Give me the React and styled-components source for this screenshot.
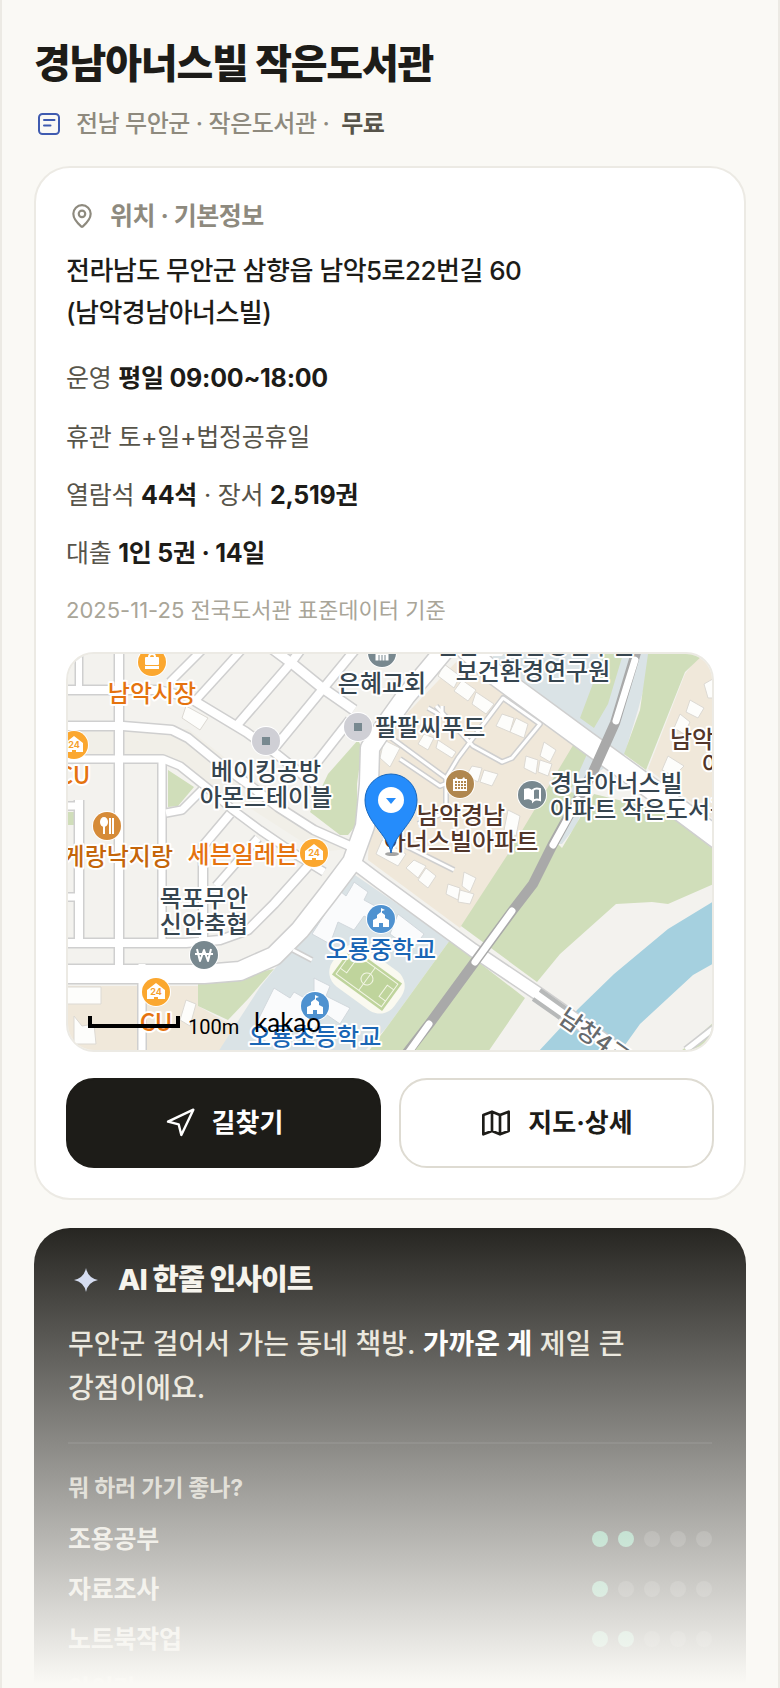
import React from 'react';
import styled, { createGlobalStyle } from 'styled-components';
import { MapPin, Navigation } from 'lucide-react';

const GlobalStyle = createGlobalStyle`
  * {
    box-sizing: border-box;
  }
  body {
    margin: 0;
    background: #faf9f5;
    color: #1d1c18;
    font-family: Inter, "Noto Sans CJK KR", sans-serif;
    word-break: keep-all;
  }
  h1, h2, h3, p, ul {
    margin: 0;
    padding: 0;
  }
`

const Page = styled.main`
  position: relative;
  height: 100vh;
  overflow: hidden;
  padding: 36px 32px 0;
  border-left: 2px solid #eceae4;
  border-right: 2px solid #eceae4;
`

const Title = styled.h1`
  font-size: 40px;
  font-weight: 800;
  line-height: 56px;
  letter-spacing: -0.03em;
`

const Meta = styled.div`
  display: flex;
  align-items: center;
  gap: 12px;
  margin: 14px 0 24px;
  font-size: 24px;
  font-weight: 500;
  line-height: 36px;
  letter-spacing: -0.02em;
  color: #8e8a7e;

  strong {
    margin-left: 6px;
    color: #57544a;
    font-weight: 600;
  }
`

const IconBox = styled.span`
  display: flex;
  align-items: center;
  justify-content: center;
  flex: none;
  width: ${(props) => props.$size}px;
`

const Card = styled.section`
  padding: 30px;
  border: 2px solid #eceae4;
  border-radius: 36px;
  background: white;
`

const CardHead = styled.h2`
  display: flex;
  align-items: center;
  gap: 12px;
  font-size: 25px;
  font-weight: 700;
  line-height: 36px;
  letter-spacing: -0.02em;
  color: #8e8a7e;
`

const Address = styled.p`
  max-width: 500px;
  margin: 16px 0 24px;
  font-size: 26px;
  font-weight: 500;
  line-height: 42px;
  letter-spacing: -0.02em;
`

const Facts = styled.div`
  display: flex;
  flex-direction: column;
  gap: 20px;
  font-size: 25px;
  line-height: 38px;
  letter-spacing: -0.01em;
  color: #57544a;

  p:first-child {
    line-height: 40px;
  }
  strong {
    color: #1d1c18;
    font-weight: 700;
  }
`

const Source = styled.p`
  font-size: 22px;
  line-height: 36px;
  letter-spacing: 0;
  color: #a9a598;
`

const MapFrame = styled.div`
  height: 400px;
  margin: 24px 0 26px;
  border: 2px solid #eceae4;
  border-radius: 28px;
  overflow: hidden;
  background: #f3f2ee;

  svg {
    display: block;
    width: 100%;
    height: 100%;
  }
`

const Actions = styled.div`
  display: grid;
  grid-template-columns: 1fr 1fr;
  gap: 18px;
`

const ActionButton = styled.button`
  display: flex;
  align-items: center;
  justify-content: center;
  gap: 16px;
  height: 90px;
  border: 2px solid ${(props) => (props.$dark ? '#1d1c18' : '#dedbd2')};
  border-radius: 28px;
  background: ${(props) => (props.$dark ? '#1d1c18' : 'white')};
  color: ${(props) => (props.$dark ? 'white' : '#1d1c18')};
  font-family: inherit;
  font-size: 26px;
  font-weight: 700;
  line-height: 32px;
`

const Insight = styled.section`
  margin-top: 28px;
  padding: 34px;
  border-radius: 36px;
  background: #1d1c18;
`

const InsightHead = styled.h2`
  display: flex;
  align-items: center;
  gap: 14px;
  font-size: 29px;
  font-weight: 800;
  line-height: 36px;
  letter-spacing: -0.03em;
  color: #f5f3ec;
`

const InsightText = styled.p`
  max-width: 600px;
  margin: 24px 0 32px;
  font-size: 28px;
  font-weight: 500;
  line-height: 44px;
  color: #e5e1d5;

  strong {
    color: white;
    font-weight: 700;
  }
`

const Purpose = styled.div`
  padding-top: 28px;
  border-top: 2px solid rgba(255, 255, 255, 0.08);
`

const PurposeTitle = styled.h3`
  margin-bottom: 20px;
  font-size: 23px;
  font-weight: 700;
  line-height: 32px;
  letter-spacing: -0.01em;
  color: #c1beb2;
`

const ScoreList = styled.ul`
  display: flex;
  flex-direction: column;
  gap: 20px;
  list-style: none;
`

const ScoreRow = styled.li`
  display: flex;
  align-items: center;
  justify-content: space-between;
  font-size: 25px;
  font-weight: 600;
  line-height: 30px;
  letter-spacing: -0.01em;
  color: #dddad0;
`

const Dots = styled.span`
  display: flex;
  gap: 10px;
`

const Dot = styled.i`
  width: 16px;
  height: 16px;
  border-radius: 50%;
  background: ${(props) => (props.$on ? '#57b38b' : 'rgba(255, 255, 255, 0.15)')};
`

const Fade = styled.div`
  position: absolute;
  left: -2px;
  right: -2px;
  bottom: 0;
  height: 480px;
  background: linear-gradient(rgba(250, 249, 245, 0), #faf9f5 99%);
  pointer-events: none;
`

const MapText = styled.text`
  font-family: "Noto Sans CJK KR", sans-serif;
  font-size: 24px;
  font-weight: 500;
  fill: ${(props) => props.$color};
  stroke: white;
  stroke-width: 4px;
  stroke-linejoin: round;
  paint-order: stroke;
`

const scores = [
  { name: '조용공부', score: 2 },
  { name: '자료조사', score: 1 },
  { name: '노트북작업', score: 2 },
  { name: '아이랑', score: 3 },
]

const ORANGE = '#e5730f'
const SLATE = '#36454f'
const BROWN = '#52362a'
const BLUE = '#1a66b5'

const labels = [
  { text: '남악시장', x: 84, y: 48, color: ORANGE },
  { text: '은혜교회', x: 314, y: 38, color: SLATE },
  { text: '전남보건환경연구원', x: 467, y: 0, color: SLATE },
  { text: '보건환경연구원', x: 465, y: 26, color: SLATE },
  { text: '팔팔씨푸드', x: 307, y: 82, color: SLATE, anchor: 'start' },
  { text: '베이킹공방', x: 198, y: 126, color: SLATE },
  { text: '아몬드테이블', x: 198, y: 152, color: SLATE },
  { text: 'CU', x: 6, y: 130, color: ORANGE },
  { text: '게랑낙지랑', x: 105, y: 211, color: '#c4650a', anchor: 'end' },
  { text: '세븐일레븐', x: 230, y: 209, color: ORANGE, anchor: 'end' },
  { text: '목포무안', x: 136, y: 253, color: SLATE },
  { text: '신안축협', x: 136, y: 279, color: SLATE },
  { text: 'CU', x: 88, y: 377, color: ORANGE },
  { text: '오룡중학교', x: 313, y: 304, color: BLUE },
  { text: '오룡초등학교', x: 247, y: 391, color: BLUE },
  { text: '남악경남', x: 393, y: 170, color: BROWN },
  { text: '아너스빌아파트', x: 393, y: 196, color: BROWN },
  { text: '경남아너스빌', x: 482, y: 138, color: SLATE, anchor: 'start' },
  { text: '아파트 작은도서관', x: 482, y: 164, color: SLATE, anchor: 'start' },
  { text: '남악', x: 602, y: 94, color: BROWN, anchor: 'start' },
  { text: '아파트', x: 634, y: 119, color: BROWN, anchor: 'start' },
]

// [path, width]
const roads = [
  ['M11-10V36', 6],
  ['M51-10V320', 8],
  ['M-10 36H90L120 43 178 78 206 98 246 130', 8],
  ['M-10 72H55L104 76 120 84 152 110 180 130 210 153 246 176 282 192', 8],
  ['M-10 105H95L112 112 142 136 165 156 192 176 230 202 256 218', 7],
  ['M134 136 114 156 98 159', 7],
  ['M94 106V289', 7],
  ['M11 146V289', 8],
  ['M162 160 135 192V289', 8],
  ['M-10 152H11M-10 243H11', 7],
  ['M-10 289H118L152 286 180 276 206 250 240 212 252 198', 8],
  ['M148 232 190 184', 7],
  ['M102 28 142-12', 7],
  ['M128 46 188-20', 7],
  ['M170 70 222 10 240-14', 8],
  ['M208 92 254 36 300-20', 8],
  ['M246 112 282 66', 8],
  ['M190-16 226 11 253 33 286 56', 9],
  ['M74 310V400', 7],
  ['M-10 320H136L172 317 206 302 232 276 260 240 284 208 297 172 301 130 302 94 318 70 338 42 360 16 390-20', 18],
  ['M386-16 425 19 519 88 585 136 660 192', 20],
  ['M284 207 312 228 405 296 469 339 570 410', 12],
]

const lanes = [
  'M318 80 378 124 390 104 435 44 472 70 444 104 434 108 405 92 368 52',
  'M332 105 372 132 382 128',
  'M338 192 386 216',
  'M225 296 244 306',
  'M378 124V158L350 170',
  'M360 54 374 62 374 52',
]

const houses = [
  'M18 333H33V350H-8V333Z',
  'M118 52 140 64 132 76 114 64Z',
  'M376 10 392 22 386 34 370 22Z',
  'M394 26 408 36 400 47 386 37Z',
  'M408 38 426 50 418 60 404 50Z',
  'M434 60 446 64 442 78 428 72Z',
  'M448 64 460 70 456 84 442 78Z',
  'M476 88 488 96 482 108 472 102Z',
  'M458 102 470 106 468 120 456 114Z',
  'M472 106 484 110 480 122 470 118Z',
  'M404 112 414 114 410 128 398 122Z',
  'M416 116 430 120 424 132 412 128Z',
  'M316 86 332 94 322 113 312 104Z',
  'M356 80 366 84 360 96 350 90Z',
  'M370 86 388 98 384 104 368 94Z',
  'M314 186 338 200 330 212 308 200Z',
  'M346 206 358 212 350 224 338 214Z',
  'M358 214 368 222 360 234 350 226Z',
  'M396 218 408 224 402 238 394 232Z',
  'M380 230 392 234 390 246 378 240Z',
  'M392 236 406 240 402 250 390 248Z',
  'M440 156 452 162 448 182 436 176Z',
  'M612 60 622 68 616 80 606 74Z',
  'M622 46 636 54 630 64 618 58Z',
  'M636 30 650 22V44L640 44Z',
  'M600 102 616 112 606 122 594 116Z',
  'M6 362 14 372 26 370 28 390H6Z',
  'M118 346 128 350 122 372 112 366Z',
]

const schoolHalls = [
  'M286 228 300 238 296 246 318 258 312 270 296 262 286 276 270 268 262 290 244 280 262 252 254 246 266 232 278 242 284 232Z',
  'M330 260 356 280 344 296 322 280Z',
  'M206 334 222 344 226 338 240 346 236 356 252 366 242 384 224 376 208 394 184 378Z',
  'M246 324 262 332 258 342 282 354 272 370 246 352Z',
]

function Bag() {
  return (
    <g fill="white">
      <rect x="-7" y="-5" width="14" height="8" rx="1" />
      <rect x="-7" y="4" width="14" height="3" />
      <path d="M-3-5a3 3 0 0 1 6 0" fill="none" stroke="white" strokeWidth="2" />
    </g>
  )
}

function Store() {
  return (
    <g>
      <path d="M-9-2 0-9 9-2V7H2V5H-2V7H-9Z" fill="white" />
      <text y="3" textAnchor="middle" fontFamily="Inter, sans-serif" fontSize="9" fontWeight="700" fill="#f5a12e">24</text>
    </g>
  )
}

function School() {
  return (
    <path
      d="M-8 8V1L-4-1V-4L0-7 4-4V-1L8 1V8H2V4H-2V8ZM0-6V-11L4-9 1-8V-6Z"
      fill="white"
    />
  )
}

function Square() {
  return <rect x="-4" y="-4" width="8" height="8" fill="#788990" />
}

function Poi({ x, y, color, children }) {
  return (
    <g transform={`translate(${x} ${y})`}>
      <circle r="15" fill="white" />
      <circle r="14" fill={color} />
      {children}
    </g>
  )
}

function KakaoMap() {
  return (
    <svg viewBox="0 0 644 396" preserveAspectRatio="xMidYMid slice" role="img" aria-label="도서관 위치 지도">
      <rect width="644" height="396" fill="#f3f2ee" />

      {/* land use */}
      <path d="M-2 75H120L230 160 282 195 250 198 160 140 100 106H-2Z" fill="#f1efe8" />
      <path d="M304 96 390 6 430 14 528 90 500 150 442 200 392 274 300 206Z" fill="#f0e8da" />
      <path d="M644 0H632L617 20 580 115 644 164Z" fill="#f0e8da" />
      <path d="M-2 332H130V352L165 372 182 398H-2Z" fill="#f0e8da" />
      <path d="M425 0H585L570 56 556 102 530 118 520 142 508 172 494 190 472 190 500 140 520 92 425 14Z" fill="#dae3e6" />
      <path d="M284 219 382 286 319 373 296 398H150L192 333 222 296Z" fill="#dae3e6" />
      <path d="M555 0H536L512 64 526 74 540 50ZM580 0H636L617 18 578 116 556 100 572 56Z" fill="#d0deba" />
      <path d="M507 88 520 98 502 138 512 140 490 190 494 194 526 140 600 158 646 196V230L600 250 584 248 548 250 492 300 469 328 393 272 440 200Z" fill="#d0deba" />
      <path d="M382 286 457 344 420 398H300L319 373Z" fill="#d0deba" />
      <path d="M290 86 294 94 289 130V170L280 181H272L242 158 260 120Z" fill="#d0deba" />
      <path d="M100 116 126 133 110 152 100 153ZM-2 158H6V171H-2Z" fill="#d0deba" />
      <path d="M130 330 206 315 180 345 160 366 130 352Z" fill="#d0deba" />
      <path d="M646 247 600 275 546 320 510 355 470 398H552L572 370 625 321 646 309Z" fill="#a5d0df" />
      <path d="M612 398 646 368V398Z" fill="#d0deba" />

      {schoolHalls.map((d) => (
        <path key={d} d={d} fill="#fafbfc" stroke="#d2d8dd" />
      ))}
      {houses.map((d) => (
        <path key={d} d={d} fill="#fdfdfb" stroke="#dcd9d3" />
      ))}

      {/* sports field */}
      <g transform="translate(299 325) rotate(36)">
        <rect x="-38" y="-24" width="76" height="48" rx="18" fill="#faf9f0" />
        <rect x="-31" y="-17" width="62" height="34" fill="#bfd49c" />
        <g fill="none" stroke="#f3f6e6" strokeWidth="1">
          <rect x="-28" y="-14" width="56" height="28" />
          <path d="M0-14V14M-28-7H-20V7H-28M28-7H20V7H28" />
          <circle r="6" />
        </g>
      </g>

      {/* roads: casing first, surface on top */}
      <g fill="none" stroke="#cfcfcf" strokeLinejoin="round">
        {lanes.map((d) => (
          <path key={d} d={d} strokeWidth="6" />
        ))}
        {roads.map(([d, width]) => (
          <path key={d} d={d} strokeWidth={width + 3} />
        ))}
      </g>
      <g fill="none" stroke="white" strokeLinejoin="round">
        {lanes.map((d) => (
          <path key={d} d={d} strokeWidth="3" />
        ))}
        {roads.map(([d, width]) => (
          <path key={d} d={d} strokeWidth={width} />
        ))}
      </g>
      <path d="M472 336 500 356M465 345 492 364" stroke="#b7b9b9" strokeWidth="4" />
      <path d="M618 396 646 374" stroke="#cfcfcf" strokeWidth="8" />
      <path d="M618 396 646 374" stroke="white" strokeWidth="5" />

      {/* railway */}
      <g fill="none" strokeLinejoin="round">
        <path d="M570-8 547 69 525 118 506 152 484 192 465 230 445 256 406 309 362 369 338 400" stroke="#a9a9a9" strokeWidth="10" />
        <path d="M567 6 548 67M510 146 485 191M444 257 407 308M361 370 338 402" stroke="white" strokeWidth="7" strokeLinecap="round" />
      </g>

      <Poi x={84} y={8} color="#fba72f"><Bag /></Poi>
      <Poi x={314} y={-1} color="#78888f">
        <path d="M-7 8V0L0-5 7 0V8ZM-3 2V8M0 2V8M3 2V8" fill="white" stroke="#78888f" />
      </Poi>
      <Poi x={198} y={87} color="#cfcfd5"><Square /></Poi>
      <Poi x={290} y={73} color="#cfcfd5"><Square /></Poi>
      <Poi x={6} y={91} color="#fba72f"><Store /></Poi>
      <Poi x={246} y={199} color="#fba72f"><Store /></Poi>
      <Poi x={88} y={338} color="#fba72f"><Store /></Poi>
      <Poi x={39} y={172} color="#d68b38">
        <ellipse cx="-3" cy="-4" rx="4" ry="5" fill="white" />
        <path d="M-3 0V8M3-8V8M6-8V8" stroke="white" strokeWidth="2" />
      </Poi>
      <Poi x={136} y={301} color="#78888f">
        <path d="M-7-6-4 6 0-5 4 6 7-6M-9-1H9" fill="none" stroke="white" strokeWidth="2" strokeLinejoin="round" />
      </Poi>
      <Poi x={313} y={265} color="#4f92d0"><School /></Poi>
      <Poi x={247} y={352} color="#4f92d0"><School /></Poi>
      <Poi x={392} y={130} color="#b0874f">
        <path d="M-7 7V-5H-5L-4-7-2-5H2L4-7 5-5H7V7Z" fill="white" />
        <path d="M-5-2H6M-5 1H6M-5 4H6" stroke="#b0874f" strokeWidth="2" strokeDasharray="2 1" />
      </Poi>
      <Poi x={464} y={141} color="#78888f">
        <path d="M0-5C-2-7-5-7-8-6V5C-5 4-2 4 0 6Z" fill="white" />
        <path d="M1-5C3-7 5-7 8-6V5C5 4 3 4 1 6Z" fill="none" stroke="white" strokeWidth="2" />
      </Poi>

      {labels.map((label) => (
        <MapText
          key={`${label.text}-${label.y}`}
          x={label.x}
          y={label.y}
          textAnchor={label.anchor || 'middle'}
          $color={label.color}
        >
          {label.text}
        </MapText>
      ))}
      <MapText $color="#666a6d" transform="translate(489 367) rotate(35)">남창4교</MapText>

      {/* marker */}
      <ellipse cx="324" cy="200" rx="7" ry="2" fill="#000000" opacity="0.35" />
      <path d="M323 199C320 180 297 168 297 146A26 26 0 0 1 349 146C349 168 326 180 323 199Z" fill="#258cfb" stroke="#1767bd" />
      <circle cx="323" cy="146" r="13" fill="white" />
      <path d="M318 144H328L323 150Z" fill="#258cfb" />

      <path d="M22 362V372H110V362" fill="none" stroke="black" strokeWidth="4" />
      <text x="120" y="380" fontFamily="Roboto, sans-serif" fontSize="20">100m</text>
      <text x="186" y="378" fontFamily="Lato, sans-serif" fontSize="26">kakao</text>
    </svg>
  )
}

function LibraryIcon() {
  return (
    <svg width="24" height="24" viewBox="0 0 24 24" fill="none" stroke="#3f5bb0" strokeWidth="2" strokeLinecap="round">
      <rect x="2" y="2" width="20" height="20" rx="3.5" />
      <path d="M7 8H17.5M7 13.5H13.5" />
    </svg>
  )
}

function MapIcon() {
  return (
    <svg width="32" height="32" viewBox="0 0 24 24" fill="none" stroke="currentColor" strokeWidth="2" strokeLinejoin="round">
      <path d="M2.5 6 9 3.5 15 6 21.5 3.5V18L15 20.5 9 18 2.5 20.5ZM9 3.5V18M15 6V20.5" />
    </svg>
  )
}

function SparkIcon() {
  return (
    <svg width="24" height="24" viewBox="0 0 24 24" fill="#cfd8f0">
      <path d="M12 0Q14 10 24 12 14 14 12 24 10 14 0 12 10 10 12 0Z" />
    </svg>
  )
}

function App() {
  const rows = scores.map((item) => {
    return (
      <ScoreRow key={item.name}>
        {item.name}
        <Dots>
          {[1, 2, 3, 4, 5].map((n) => (
            <Dot key={n} $on={n <= item.score} />
          ))}
        </Dots>
      </ScoreRow>
    )
  })

  return (
    <Page>
      <GlobalStyle />
      <Title>경남아너스빌 작은도서관</Title>
      <Meta>
        <IconBox $size={30}><LibraryIcon /></IconBox>
        <span>전남 무안군 · 작은도서관 · <strong>무료</strong></span>
      </Meta>

      <Card>
        <CardHead>
          <IconBox $size={32}><MapPin size={26} strokeWidth={2} /></IconBox>
          위치 · 기본정보
        </CardHead>
        <Address>전라남도 무안군 삼향읍 남악5로22번길 60 (남악경남아너스빌)</Address>
        <Facts>
          <p>운영 <strong>평일 09:00~18:00</strong></p>
          <p>휴관 토+일+법정공휴일</p>
          <p>열람석 <strong>44석</strong> · 장서 <strong>2,519권</strong></p>
          <p>대출 <strong>1인 5권 · 14일</strong></p>
          <Source>2025-11-25 전국도서관 표준데이터 기준</Source>
        </Facts>
        <MapFrame>
          <KakaoMap />
        </MapFrame>
        <Actions>
          <ActionButton $dark>
            <Navigation size={32} strokeWidth={1.8} />
            길찾기
          </ActionButton>
          <ActionButton>
            <MapIcon />
            지도·상세
          </ActionButton>
        </Actions>
      </Card>

      <Insight>
        <InsightHead>
          <IconBox $size={36}><SparkIcon /></IconBox>
          AI 한줄 인사이트
        </InsightHead>
        <InsightText>
          무안군 걸어서 가는 동네 책방. <strong>가까운 게</strong> 제일 큰 강점이에요.
        </InsightText>
        <Purpose>
          <PurposeTitle>뭐 하러 가기 좋나?</PurposeTitle>
          <ScoreList>{rows}</ScoreList>
        </Purpose>
      </Insight>
      <Fade />
    </Page>
  );
}

export default App;
